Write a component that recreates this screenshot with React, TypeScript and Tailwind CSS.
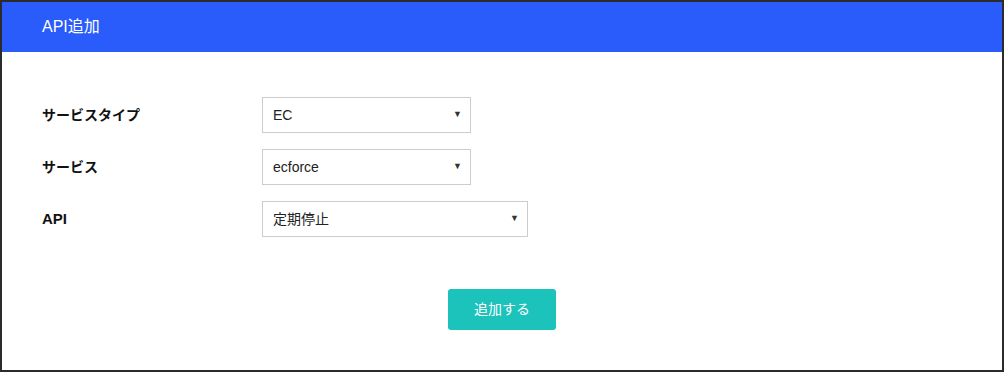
const font = { fontFamily: '"Liberation Sans", "Noto Sans CJK JP", sans-serif' };

function FakeSelect({ value, width }: { value: string; width: string }) {
  return (
    <div
      className={`flex h-[36px] ${width} items-center justify-between border border-[#cccccc] bg-white pl-[10px] pr-[8px] text-[14px] text-[#222]`}
    >
      <span>{value}</span>
      <span className="text-[9px] text-[#333]">▼</span>
    </div>
  );
}

const rows = [
  { label: "サービスタイプ", value: "EC", width: "w-[209px]", size: "text-[14px]" },
  { label: "サービス", value: "ecforce", width: "w-[209px]", size: "text-[14px]" },
  { label: "API", value: "定期停止", width: "w-[266px]", size: "text-[15px]" },
];

export default function App() {
  return (
    <div className="h-[372px] w-[1004px] border-2 border-[#2b2b2b] bg-white" style={font}>
      {/* Header */}
      <div className="flex h-[50px] items-center bg-[#2a5bfb] px-[40px] text-[16px] text-white">
        API追加
      </div>

      {/* Form */}
      <div className="flex flex-col gap-[16px] px-[40px] pt-[45px]">
        {rows.map((row) => (
          <div key={row.label} className="flex items-center">
            <div className={`w-[220px] ${row.size} font-bold text-[#111]`}>{row.label}</div>
            <FakeSelect value={row.value} width={row.width} />
          </div>
        ))}
      </div>

      <div className="flex justify-center pt-[52px]">
        <button className="h-[41px] w-[108px] rounded-[3px] bg-[#1bc3bb] text-[14px] text-white">
          追加する
        </button>
      </div>
    </div>
  );
}
